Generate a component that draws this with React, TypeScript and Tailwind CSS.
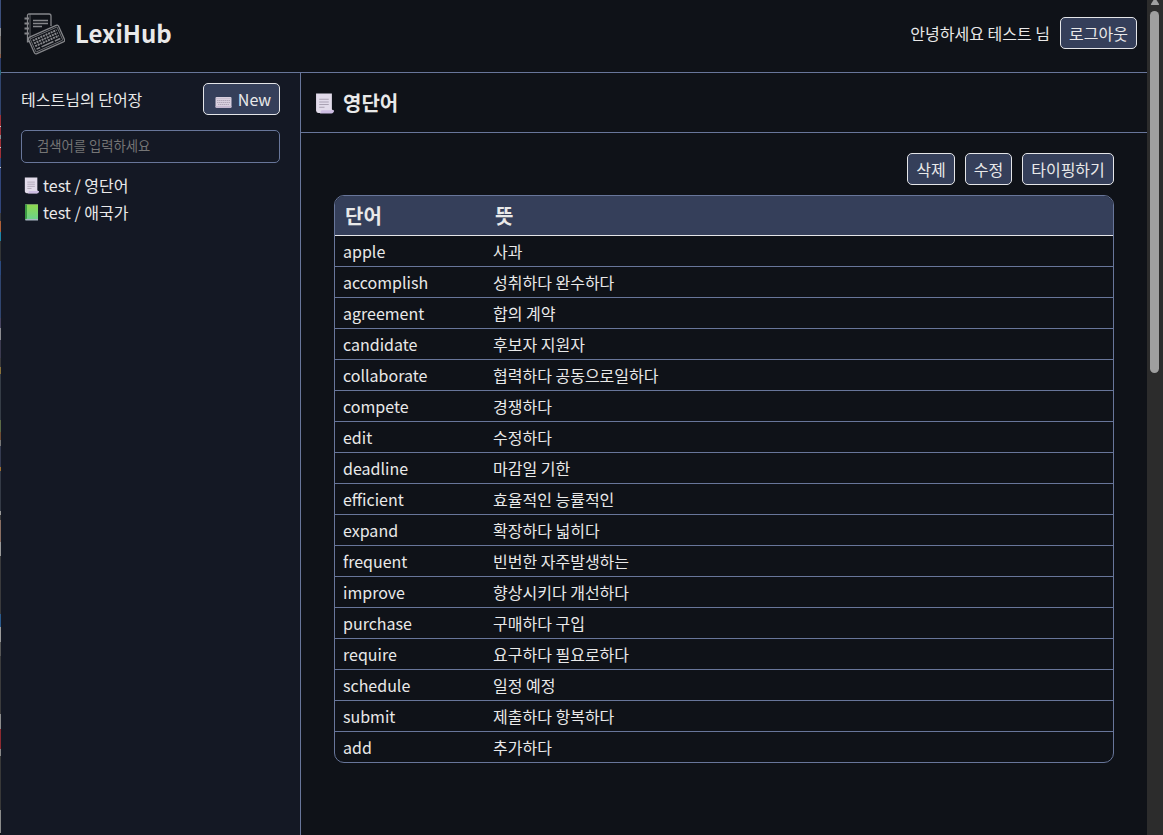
import React from "react";

const words: [string, string][] = [
  ["apple", "사과"],
  ["accomplish", "성취하다 완수하다"],
  ["agreement", "합의 계약"],
  ["candidate", "후보자 지원자"],
  ["collaborate", "협력하다 공동으로일하다"],
  ["compete", "경쟁하다"],
  ["edit", "수정하다"],
  ["deadline", "마감일 기한"],
  ["efficient", "효율적인 능률적인"],
  ["expand", "확장하다 넓히다"],
  ["frequent", "빈번한 자주발생하는"],
  ["improve", "향상시키다 개선하다"],
  ["purchase", "구매하다 구입"],
  ["require", "요구하다 필요로하다"],
  ["schedule", "일정 예정"],
  ["submit", "제출하다 항복하다"],
  ["add", "추가하다"],
];

const edge: [number, string][] = [
  [28, "#3c4f7c"], [8, "#8d8f92"], [18, "#77706c"], [4, "#8a5c48"], [12, "#2c3c68"], [5, "#2b6a80"], [40, "#31456f"],
  [11, "#a03038"], [1, "#cccccc"], [8, "#a03038"], [4, "#8c8c90"], [8, "#a03038"], [1, "#cccccc"], [10, "#a03038"],
  [9, "#31497c"], [1, "#cccccc"], [45, "#31457a"], [8, "#3a3a3c"], [11, "#b06038"],
  [9, "#1f86a8"], [20, "#333536"], [14, "#2b4a80"], [43, "#30456f"], [10, "#474460"], [12, "#8b8b90"],
  [18, "#3c3a50"], [9, "#3a3a3c"], [7, "#89713a"], [46, "#353c46"], [12, "#5b6a45"], [8, "#704c34"], [6, "#777777"], [21, "#343a50"],
  [4, "#a07030"], [40, "#343a46"], [4, "#999999"], [5, "#3a3a3c"], [22, "#8a6e62"], [14, "#999999"],
  [58, "#3a3a3c"], [13, "#2b5a8c"], [15, "#9a9a9a"],
  [14, "#565656"], [58, "#3b3b3c"], [15, "#8c8c8c"], [20, "#8d2a30"], [7, "#888888"], [54, "#383838"], [23, "#8b8b8b"],
];

function Scroll() {
  return (
    <svg className="h-full w-full" viewBox="0 0 18 20" preserveAspectRatio="none">
      <path d="M1 .5H16V15.500L18 17.500H17L15.500 19H4Q1.500 19.500 1 17Z" fill="#e2dbea" />
      <path d="M5.500 17.300Q5.500 16.500 7 16.500H18Q18 19.500 15.500 19.500H4.500Q6 18.800 5.500 17.300Z" fill="#cdbde2" />
      <path d="M4 6H13M4 8.500H13M4 11H13M4 13.500H9" stroke="#aaa2b3" />
    </svg>
  );
}

function Keyboard() {
  return (
    <svg className="mt-[5px] h-[12px] w-[17px] shrink-0" viewBox="0 0 17 12">
      <rect x=".5" y="1" width="16" height="10.500" rx="1" fill="#d9d0df" />
      <path d="M.5 10H16.500V11Q16.500 12 15.500 12H1.500Q.5 12 .5 11Z" fill="#c5b8d0" />
      <path d="M1 2.500H16" stroke="#c0b6c6" strokeWidth=".6" />
      <path d="M2 4.500H15M2 6.500H15M3 8.500H14" stroke="#a69cad" strokeWidth=".8" strokeDasharray="1.500 .5" />
    </svg>
  );
}

function Logo() {
  return (
    <svg className="h-[42px] w-[42px] shrink-0" viewBox="0 0 42 42" fill="none" stroke="#85868a" strokeWidth="1.300">
      <path d="M4.500 29.500V2.500Q4.500 1 6 1H26Q28 1 28 3V13M4.500 28.500H7" />
      <path d="M7 1V26" strokeWidth=".7" />
      <path d="M1.500 5.500H6M1.500 10.500H6M1.500 15.500H6M1.500 20.500H6" strokeWidth="1.800" />
      <path d="M10 7.500H25M10 10.500H25M10 13.500H19" />
      <g transform="rotate(-24 23.500 26.500)">
        <rect x="7" y="17.500" width="33" height="18" rx="2" />
        <rect x="8.800" y="19.300" width="29.400" height="14.400" rx=".5" strokeWidth=".7" />
        <path d="M10.500 22H36.500M10.500 25H36.500M10.500 28H36.500" strokeWidth="2" strokeDasharray="2 .8" />
        <path d="M10.500 31.200H14.500M16 31.200H29M30.500 31.200H36.500" strokeWidth="1.500" />
      </g>
    </svg>
  );
}

function Button({ className, children }: { className: string; children: React.ReactNode }) {
  return (
    <button className={`flex h-8 shrink-0 items-center justify-center rounded-[5px] border border-[#e4e5e8] bg-[#353f5a] text-base leading-6 ${className}`}>
      {children}
    </button>
  );
}

export default function App() {
  return (
    <div className="flex h-[835px] w-[1163px] overflow-hidden bg-[#0f1218] font-['Noto_Sans_CJK_KR','Noto_Sans',sans-serif] font-normal text-base leading-6 text-[#e9e9e9]">
      <div className="flex w-px shrink-0 flex-col">
        {edge.map(([height, color], i) => (
          <div key={i} className="w-px shrink-0" style={{ height, backgroundColor: color }} />
        ))}
      </div>
      <div className="flex min-w-0 grow flex-col">
        <header className="flex h-[73px] shrink-0 justify-between border-b border-[#68769a] pr-[10px] pl-[22px]">
          <div className="flex pt-[13px]">
            <Logo />
            <h1 className="ml-[10px] text-2xl leading-[40px] font-bold">LexiHub</h1>
          </div>
          <div className="flex h-8 items-center gap-[10px] mt-[17px]">
            <span className="whitespace-nowrap">안녕하세요 테스트 님</span>
            <Button className="w-[77px]">로그아웃</Button>
          </div>
        </header>
        <div className="flex min-h-0 grow">
          <aside className="w-[300px] shrink-0 border-r border-[#68769a] bg-[#141824] px-5 pt-[10px]">
            <div className="flex items-center justify-between">
              <span>테스트님의 단어장</span>
              <Button className="w-[77px] gap-[6px] pl-[3px]"><Keyboard /><span>New</span></Button>
            </div>
            <input
              className="mt-[15px] block h-[33px] w-[259px] rounded-[5px] border border-[#68769a] bg-transparent px-[15px] pb-[2px] text-[13.333px] font-normal placeholder:text-[#757575]"
              placeholder="검색어를 입력하세요"
            />
            <ul className="mt-2">
              <li className="flex h-[27px] items-center">
                <span className="mr-[4px] ml-[3px] mt-[2px] h-[17px] w-[15px]"><Scroll /></span>
                <span>test / 영단어</span>
              </li>
              <li className="flex h-[27px] items-center">
                <span className="mr-[4px] ml-[3px] mt-[2px] h-[17px] w-[15px]">
                  <svg className="h-full w-full" viewBox="0 0 15 17">
                    <defs>
                      <linearGradient id="cover" x1="0" y1="0" x2="0" y2="1">
                        <stop stopColor="#8fd84d" /><stop offset="1" stopColor="#6bd08b" />
                      </linearGradient>
                    </defs>
                    <path d="M1 .5H14V16.500H2Q1 16.500 1 15Z" fill="#a7b5c1" />
                    <path d="M2 .5H14V15H2Z" fill="url(#cover)" />
                    <path d="M1 .5H3V14.500L1 15.500Z" fill="#3c9b43" />
                  </svg>
                </span>
                <span>test / 애국가</span>
              </li>
            </ul>
          </aside>
          <main className="min-w-0 grow">
            <div className="flex h-[60px] items-center gap-2 border-b border-[#68769a] pl-[14px]">
              <span className="mt-px mr-px h-[21px] w-[19px]"><Scroll /></span>
              <h2 className="text-xl font-bold">영단어</h2>
            </div>
            <div className="pt-5 pr-[33px] pl-[33px]">
              <div className="flex justify-end gap-[10px]">
                <Button className="w-12">삭제</Button>
                <Button className="w-[47px]">수정</Button>
                <Button className="w-[92px]">타이핑하기</Button>
              </div>
              <div className="mt-[10px] w-[780px] overflow-hidden rounded-[10px] border border-[#68769a]">
                <div className="grid h-10 grid-cols-[150px_1fr] items-center border-b border-[#e4e5e8] bg-[#353f5a] px-[10px] text-xl font-bold">
                  <span>단어</span><span>뜻</span>
                </div>
                <div className="divide-y divide-[#68769a]">
                  {words.map(([word, meaning]) => (
                    <div key={word} className="grid h-[31px] grid-cols-[150px_1fr] items-center px-2 last:h-[30px]">
                      <span>{word}</span><span>{meaning}</span>
                    </div>
                  ))}
                </div>
              </div>
            </div>
          </main>
        </div>
      </div>
      <div className="flex w-4 shrink-0 flex-col items-center bg-[#2c2c2c]">
        <svg className="h-[11px] w-[10px] shrink-0" viewBox="0 0 10 11"><path d="M3.500 0H6.500L9 4Q9.500 5 8.500 5H1.500Q.5 5 1 4Z" fill="#9f9f9f" /></svg>
        <div className="mr-px h-[362px] w-[9px] rounded-full bg-[#9f9f9f]" />
      </div>
    </div>
  );
}
